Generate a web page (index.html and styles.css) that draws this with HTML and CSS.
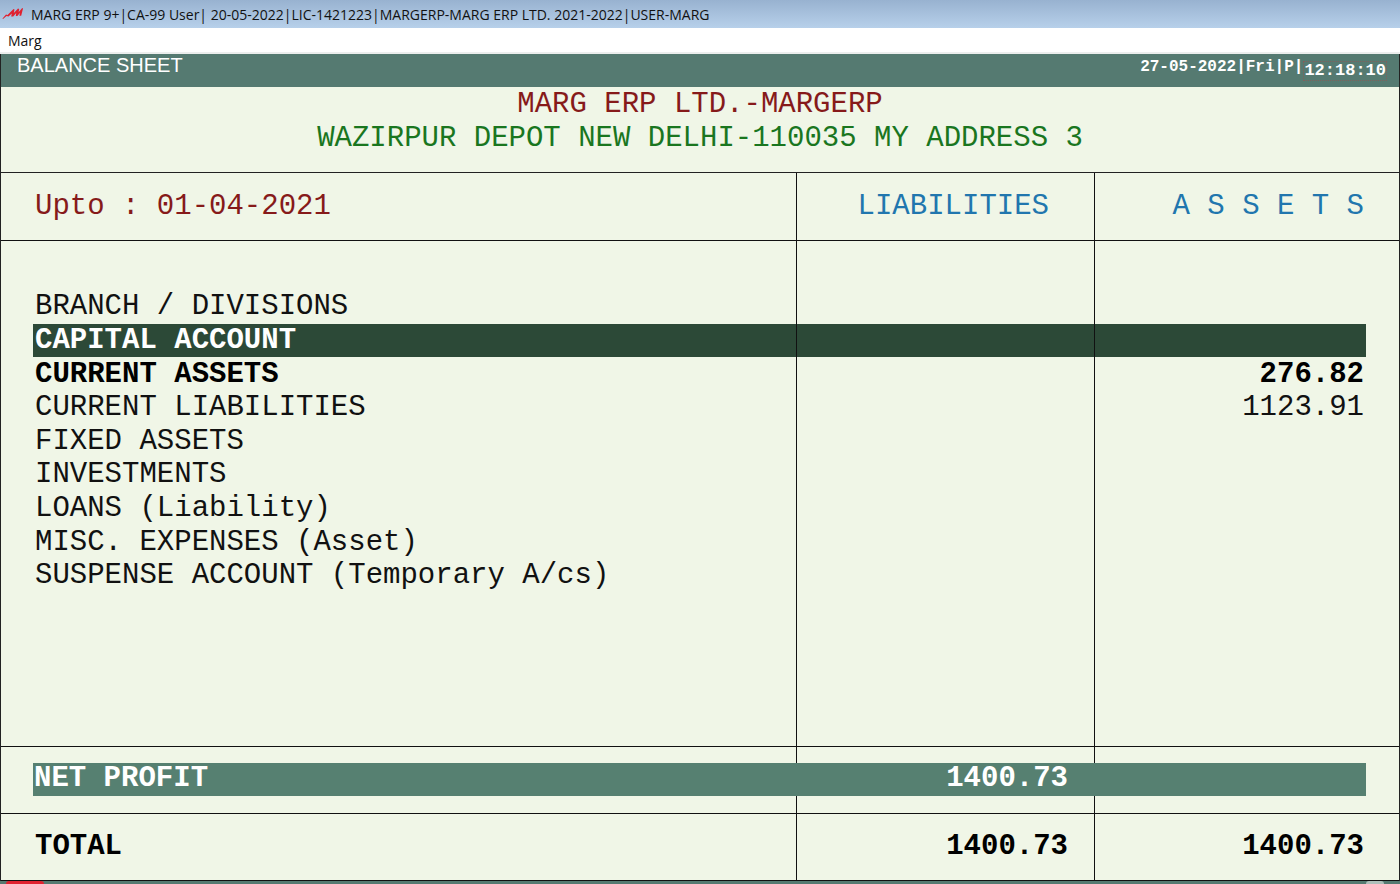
FILE: index.html
```html
<!DOCTYPE html>
<html lang="en">
<head>
<meta charset="utf-8">
<title>Balance Sheet</title>
<link rel="stylesheet" href="styles.css">
</head>
<body>
<div class="app">
  <header class="titlebar">
    <svg class="logo" viewBox="0 0 22 14" aria-hidden="true">
      <path d="M0.5 11.5 L4 7.5 L5.5 8 L11.5 2 L12.5 2.5 L11.8 6 L16 1.6 L17.2 2 L16.6 5.2 L20.2 1 L21 1.4 L19.2 8.8 L17.4 8.8 L18 5.8 L15.4 9 L13.8 9 L14.2 6 L11.2 9.4 L9.2 9.4 L9.8 6.4 L6.5 9.5 L4.5 9 L1 12 Z" fill="#e0212f"/>
    </svg>
    <span>MARG ERP 9+|CA-99 User| 20-05-2022|LIC-1421223|MARGERP-MARG ERP LTD. 2021-2022|USER-MARG</span>
  </header>
  <nav class="menubar"><button class="menu" type="button">Marg</button></nav>
  <main class="sheet">
    <div class="banner">
      <h1 class="banner-title">BALANCE SHEET</h1>
      <div class="stamp"><span class="date">27-05-2022|Fri|P|</span><time class="clock">12:18:10</time></div>
    </div>
    <div class="company">
      <h2 class="company-name">MARG ERP LTD.-MARGERP</h2>
      <p class="company-address">WAZIRPUR DEPOT NEW DELHI-110035 MY ADDRESS 3</p>
    </div>
    <table class="ledger">
      <thead>
        <tr><th class="upto">Upto : 01-04-2021</th><th class="liabilities">LIABILITIES</th><th>A S S E T S</th></tr>
      </thead>
      <tbody>
        <tr class="spacer"><td></td><td></td><td></td></tr>
        <tr><td>BRANCH / DIVISIONS</td><td></td><td></td></tr>
        <tr class="selected"><td>CAPITAL ACCOUNT</td><td></td><td></td></tr>
        <tr class="strong"><td>CURRENT ASSETS</td><td></td><td>276.82</td></tr>
        <tr><td>CURRENT LIABILITIES</td><td></td><td>1123.91</td></tr>
        <tr><td>FIXED ASSETS</td><td></td><td></td></tr>
        <tr><td>INVESTMENTS</td><td></td><td></td></tr>
        <tr><td>LOANS (Liability)</td><td></td><td></td></tr>
        <tr><td>MISC. EXPENSES (Asset)</td><td></td><td></td></tr>
        <tr><td>SUSPENSE ACCOUNT (Temporary A/cs)</td><td></td><td></td></tr>
        <tr class="filler"><td></td><td></td><td></td></tr>
      </tbody>
      <tfoot>
        <tr class="profit"><td><span class="bar">NET PROFIT</span></td><td><span class="bar">1400.73</span></td><td><span class="bar"></span></td></tr>
        <tr class="total"><td>TOTAL</td><td>1400.73</td><td>1400.73</td></tr>
      </tfoot>
    </table>
  </main>
  <footer class="strip"><span class="tab"></span><span class="grip"></span></footer>
</div>
</body>
</html>
```
FILE: styles.css
```css
* { box-sizing: border-box; }

body {
  margin: 0;
  color: #111;
  background: #f0f6e7;
  font-family: "Liberation Mono", monospace;
}

.app {
  display: flex;
  flex-direction: column;
  min-height: 100vh;
}

.titlebar {
  display: flex;
  align-items: center;
  gap: 7px;
  height: 28px;
  padding: 0 2px;
  background: linear-gradient(#98b2d0, #b7d0ea);
  font: 14px "Open Sans", sans-serif;
  white-space: nowrap;
}

.logo { width: 22px; height: 14px; }

.menubar {
  display: flex;
  height: 26px;
  background: #fff;
  border-bottom: 2px solid #eceeed;
}

.menu {
  padding: 0 8px;
  border: 0;
  background: none;
  color: #111;
  font: 14px "Open Sans", sans-serif;
}

.sheet {
  display: flex;
  flex: 1;
  flex-direction: column;
  border: solid #222;
  border-width: 0 1px;
}

.banner {
  display: flex;
  justify-content: space-between;
  height: 33px;
  padding: 0 12px 0 16px;
  background: #557a71;
  color: #fff;
}

.banner-title {
  margin: 0;
  font: 20px/23px "Liberation Sans", sans-serif;
}

.stamp { display: flex; font-weight: bold; }
.date { font-size: 16px; line-height: 26px; }

.clock {
  align-self: center;
  border: 1px dotted #80605c;
  font-size: 17px;
  line-height: 18px;
}

.company {
  height: 86px;
  padding-top: 1px;
  border-bottom: 1px solid #222;
  text-align: center;
}

.company-name,
.company-address {
  margin: 0;
  font-size: 29px;
  font-weight: normal;
  line-height: 34px;
}

.company-name { color: #861a1a; }
.company-address { color: #1a761f; }

.ledger {
  display: flex;
  flex: 1;
  flex-direction: column;
  font-size: 29px;
  line-height: 32px;
  white-space: nowrap;
}

.ledger thead,
.ledger tbody { border-bottom: 1px solid #111; }

.ledger thead { display: grid; flex: 2 0 0; color: #2176ae; }

.ledger tbody {
  display: grid;
  flex: 15 0 0;
  grid-template-rows: 145fr repeat(9, 100fr) 455fr;
}

.ledger tfoot { display: grid; flex: 4 0 0; grid-template-rows: 1fr 1fr; }

.ledger tr {
  display: grid;
  grid-template-columns: 764fr 298fr 271fr;
  padding: 0 33px 0 32px;
}

.ledger th,
.ledger td {
  display: flex;
  align-items: center;
  justify-content: flex-end;
  padding: 1px 2px 0 0;
  font-weight: inherit;
}

.ledger th:first-child,
.ledger td:first-child { justify-content: flex-start; padding-left: 2px; }

.ledger th:not(:last-child),
.ledger td:not(:last-child) { border-right: 1px solid #111; }

.ledger td:nth-child(2) { padding-right: 26px; }
.ledger .liabilities { padding-right: 45px; }
.ledger .upto { color: #861a1a; }

.ledger .selected { color: #fff; font-weight: bold; }
.ledger .selected td { background-color: #2c4937; }
.ledger .strong { color: #000; font-weight: bold; }

.ledger tfoot tr { border-bottom: 1px solid #111; font-weight: bold; color: #000; }

.ledger .profit td { padding: 0; }

.bar {
  flex: 1;
  height: 33px;
  background: #568071;
  color: #fff;
}

/* The bar runs across the column rules. */
.profit td:not(:last-child) .bar { margin-right: -1px; }
.profit td:first-child .bar { padding-left: 1px; }
.profit td:nth-child(2) .bar { padding-right: 27px; text-align: right; }

.strip {
  display: flex;
  justify-content: space-between;
  height: 3px;
  padding: 0 16px 0 6px;
  background: #557a71;
}

.tab { width: 38px; border-radius: 8px 8px 0 0; background: #e0212f; }
.grip { width: 18px; border-radius: 3px 3px 0 0; background: #aebfba; }
```
